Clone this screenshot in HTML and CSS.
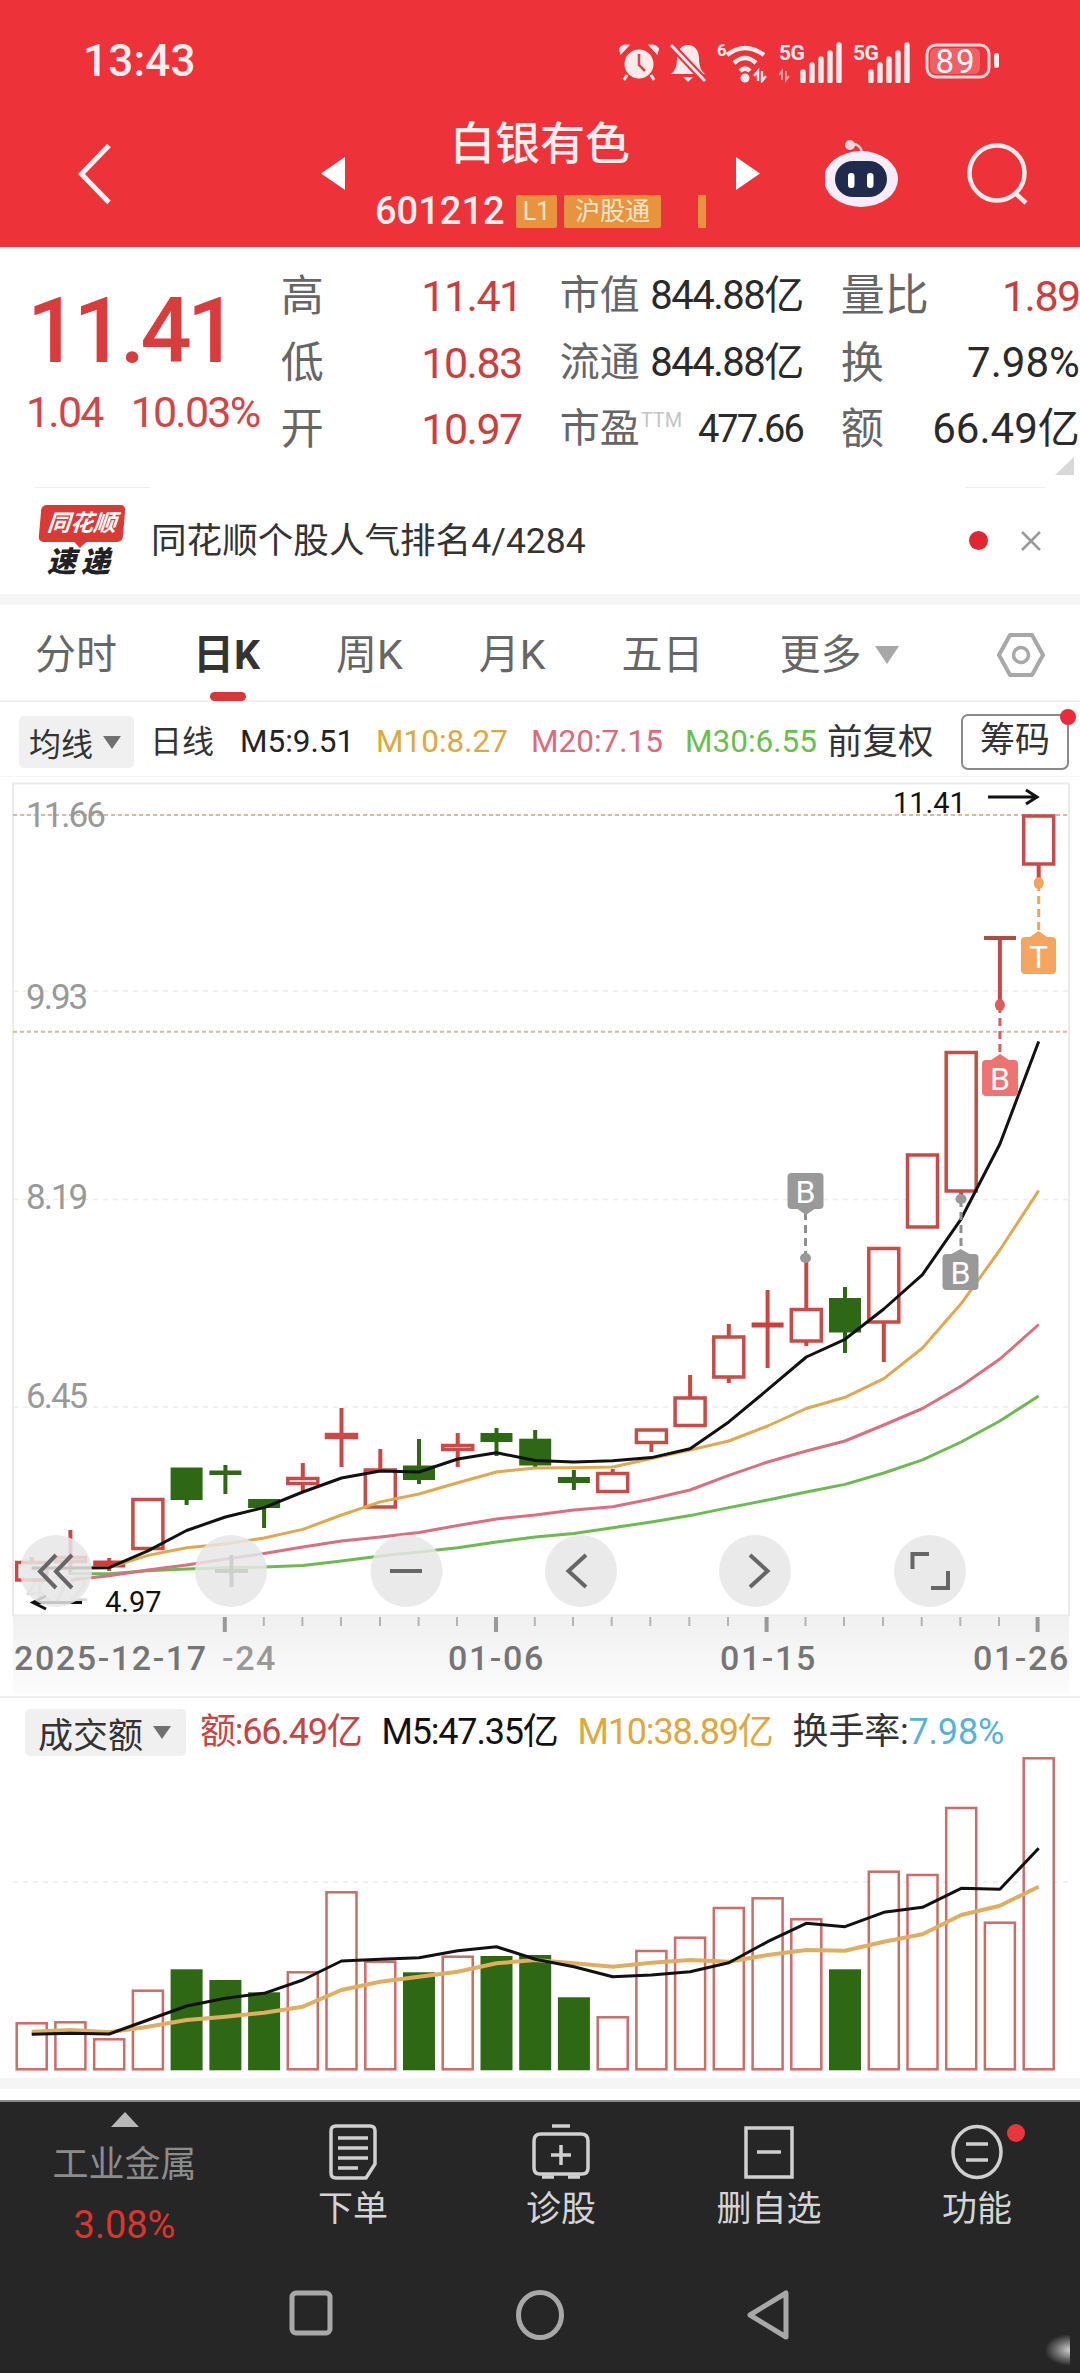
FILE: index.html
```html
<!DOCTYPE html>
<html lang="zh-CN">
<head>
    <meta charset="UTF-8">
    <meta name="viewport" content="width=device-width, initial-scale=1.0">
    <title>白银有色</title>
    <link rel="stylesheet" href="styles.css">
</head>
<body>
    <header class="top">
        <div class="status">
            <span class="clock">13:43</span>
            <div class="status-icons">
                <svg class="ico-alarm" viewBox="0 0 40 38" width="40" height="38">
                    <circle cx="20" cy="21" r="14.5" fill="#fdeaea"/>
                    <path d="M20 11v11l6 6" fill="none" stroke="#d9474c" stroke-width="2.6"/>
                    <path d="M2 10 L9 2.5 Q3 2 1 6Z M38 10 L31 2.5 Q37 2 39 6Z" fill="#fdeaea" stroke="#fdeaea" stroke-width="2"/>
                    <path d="M8 32l-3 5M32 32l3 5" stroke="#fdeaea" stroke-width="3"/>
                </svg>
                <svg class="ico-bell" viewBox="0 0 38 40" width="38" height="40">
                    <path d="M19 2c-7 0-11 6-11 13 0 6-1 12-6 16h34c-5-4-6-10-6-16 0-7-4-13-11-13z" fill="#fdeaea"/>
                    <path d="M14 34h10l-5 5z" fill="#fdeaea"/>
                    <path d="M3 3l33 35" stroke="#ee3239" stroke-width="7"/>
                    <path d="M2 2l34 36" stroke="#fdeaea" stroke-width="3"/>
                </svg>
                <svg class="sig-box" viewBox="0 -6 52 46" width="52" height="46">
                    <text class="sig-six" x="0" y="13">6</text>
                    <path d="M10 12Q28-2 47 12M17 20Q28 10 39 20M23 28Q28 23 33 28" fill="none" stroke="#fdeaea" stroke-width="4.5"/>
                    <circle cx="28" cy="35" r="4.5" fill="#fdeaea"/>
                    <path d="M41 38V28l-4 5M45 28v10l4-5" fill="none" stroke="#fdeaea" stroke-width="2.4"/>
                </svg>
                <svg class="sig-box" viewBox="0 -6 64 46" width="64" height="46">
                    <text class="sig-5g" x="0" y="17">5G</text>
                    <path d="M3 37V28l-3 4M7 28v9l3-4" fill="none" stroke="#f59aa0" stroke-width="2"/>
                    <path d="M18 38V29M27 38V22M36 38V16M45 38V10M54 38V2" transform="translate(6 0)" stroke="#fdeaea" stroke-width="5.4" stroke-linecap="round"/>
                </svg>
                <svg class="sig-box" viewBox="0 -6 58 46" width="58" height="46">
                    <text class="sig-5g" x="0" y="17">5G</text>
                    <path d="M18 38V29M27 38V22M36 38V16M45 38V10M54 38V2" stroke="#fdeaea" stroke-width="5.4" stroke-linecap="round"/>
                </svg>
                <svg class="sig-box ico-batt" viewBox="0 -6 74 48" width="74" height="48">
                    <rect x="2" y="2" width="62" height="32" rx="9" fill="none" stroke="#fbd6d8" stroke-width="3"/>
                    <rect x="5" y="5" width="50" height="26" rx="6" fill="#fff" opacity=".22"/>
                    <rect x="69" y="10" width="5" height="15" rx="2.5" fill="#fdeaea"/>
                    <text class="batt-num" x="31" y="30">89</text>
                </svg>
            </div>
        </div>
        <nav class="stock-nav">
            <svg class="back" viewBox="0 0 34 62" width="34" height="62"><path d="M31 2.5 3.5 31 31 59.5" fill="none" stroke="#fdf0f0" stroke-width="5"/></svg>
            <svg class="tri-left" viewBox="0 0 24 33" width="24" height="33"><path d="M24 0v33L0 16.5z" fill="#fff"/></svg>
            <div class="stock-title">
                <div class="stock-name">白银有色</div>
                <div class="stock-code-row">
                    <span class="stock-code">601212</span>
                    <span class="badge badge-l1">L1</span>
                    <span class="badge badge-hk">沪股通</span>
                    <span class="badge-bar"></span>
                </div>
            </div>
            <svg class="tri-right" viewBox="0 0 24 33" width="24" height="33"><path d="M0 0v33L24 16.5z" fill="#fff"/></svg>
            <svg class="robot" viewBox="825 136 74 70" width="74" height="70">
                <path d="M850 142q9-3 12 7" fill="none" stroke="#f7d4dc" stroke-width="2.5"/>
                <circle cx="850" cy="142" r="5" fill="#f7d4dc"/>
                <ellipse cx="861" cy="176" rx="37" ry="28" fill="#f5eef8"/>
                <rect x="835" y="158" width="52" height="36" rx="18" fill="#1f2a4c"/>
                <rect x="848" y="170" width="6.5" height="15" rx="3" fill="#fff"/>
                <rect x="867" y="170" width="6.5" height="15" rx="3" fill="#fff"/>
            </svg>
            <svg class="search" viewBox="965 143 62 62" width="62" height="62">
                <circle cx="995" cy="173" r="27.5" fill="none" stroke="#fdeaea" stroke-width="4.5"/>
                <path d="M1013 193l11 10" stroke="#fdeaea" stroke-width="4.5"/>
            </svg>
        </nav>
    </header>

    <section class="quote">
        <div class="price">
            <div class="price-now">11.41</div>
            <div class="price-change"><span>1.04</span><span>10.03%</span></div>
        </div>
        <div class="quote-grid">
            <div class="cell"><span class="lab lab-big">高</span><span class="val up">11.41</span></div>
            <div class="cell"><span class="lab">市值</span><span class="val">844.88亿</span></div>
            <div class="cell"><span class="lab lab-wide">量比</span><span class="val up">1.89</span></div>
            <div class="cell"><span class="lab lab-big">低</span><span class="val up">10.83</span></div>
            <div class="cell"><span class="lab">流通</span><span class="val">844.88亿</span></div>
            <div class="cell"><span class="lab lab-big">换</span><span class="val val-wide">7.98%</span></div>
            <div class="cell"><span class="lab lab-big">开</span><span class="val up">10.97</span></div>
            <div class="cell"><span class="lab">市盈<sup class="ttm">TTM</sup></span><span class="val val-tight">477.66</span></div>
            <div class="cell"><span class="lab lab-big">额</span><span class="val val-wide">66.49亿</span></div>
        </div>
        <span class="corner"></span>
    </section>

    <section class="news">
        <div class="news-logo">
            <div class="logo-top">同花顺</div>
            <div class="logo-bottom">速递</div>
        </div>
        <span class="news-text">同花顺个股人气排名4/4284</span>
        <span class="news-dot"></span>
        <svg class="news-close" viewBox="0 0 24 24" width="24" height="24"><path d="M3 3l18 18M21 3 3 21" stroke="#999" stroke-width="2.5"/></svg>
    </section>

    <div class="gap-band"></div>

    <div class="tabs">
        <span class="tab">分时</span>
        <span class="tab tab-active">日K</span>
        <span class="tab">周K</span>
        <span class="tab">月K</span>
        <span class="tab">五日</span>
        <span class="tab">更多</span>
        <span class="caret caret-tab"></span>
        <svg class="hex" viewBox="0 0 48 46" width="48" height="46">
            <path d="M13 3h22l11 20-11 20H13L2 23z" fill="none" stroke="#a8a8a8" stroke-width="4" stroke-linejoin="round"/>
            <circle cx="24" cy="23" r="7.5" fill="none" stroke="#a8a8a8" stroke-width="3.5"/>
        </svg>
    </div>

    <div class="ma-bar">
        <div class="select select-ma"><span>均线</span><span class="caret caret-small"></span></div>
        <span class="ma ma-day">日线</span>
        <span class="ma ma5">M5:9.51</span>
        <span class="ma ma10">M10:8.27</span>
        <span class="ma ma20">M20:7.15</span>
        <span class="ma ma30">M30:6.55</span>
        <span class="ma ma-adj">前复权</span>
        <span class="chips">筹码</span>
    </div>

    <svg class="kline" viewBox="0 777 1080 919" width="1080" height="919">
        <defs>
            <linearGradient id="axis-bg" x1="0" y1="0" x2="0" y2="1">
                <stop offset="0" stop-color="#f0f0f0"/>
                <stop offset="1" stop-color="#fcfcfc"/>
            </linearGradient>
        </defs>
        <path class="frame" d="M13 783.5H1069M13 783V1615.5H1069V783"/>
        <rect x="13" y="1616" width="1056" height="78" fill="url(#axis-bg)"/>

        <path class="grid" d="M13 815H1069M13 991H1069M13 1199.5H1069M13 1407H1069"/>
        <path class="grid-tan" d="M13 815H1069M13 1031.7H1069"/>

        <text class="axis-y" x="26" y="827">11.66</text>
        <text class="axis-y" x="26" y="1009">9.93</text>
        <text class="axis-y" x="26" y="1209">8.19</text>
        <text class="axis-y" x="26" y="1408">6.45</text>
        <text class="axis-y axis-faint" x="26" y="1601">4.72</text>

        <!-- wicks -->
        <path class="wick-up" d="M31.7 1557V1561M70.4 1530V1556M70.4 1563V1575M109.2 1558V1571M302.8 1463V1477M302.8 1485V1492M341.5 1408V1433M341.5 1439V1467M380.3 1449V1469M457.7 1433V1444M457.7 1451V1467M612.7 1469V1472M651.4 1444V1452M690.1 1375V1397M728.8 1324V1336M728.8 1378V1383M767.6 1290V1368M806.3 1259V1308M806.3 1342V1346M883.8 1323V1362M961.2 1192V1198M999.9 938V1005M1038.7 865V883"/>
        <path class="wick-down" d="M186.6 1500V1505M225.4 1465V1494M264.1 1508V1528M419 1439V1484M496.5 1428V1456M535.2 1430V1468M573.9 1470V1490M845 1287V1353"/>

        <!-- rising days, hollow -->
        <g class="body-up">
            <rect x="16.7" y="1562.5" width="30" height="17.5"/>
            <rect x="55.4" y="1557.5" width="30" height="4"/>
            <rect x="132.9" y="1499.5" width="30" height="49"/>
            <rect x="287.8" y="1478.5" width="30" height="5"/>
            <rect x="326.5" y="1434.5" width="30" height="3"/>
            <rect x="365.3" y="1470" width="30" height="37"/>
            <rect x="442.7" y="1445.5" width="30" height="4"/>
            <rect x="597.7" y="1473.5" width="30" height="18"/>
            <rect x="636.4" y="1430" width="30" height="12.5"/>
            <rect x="675.1" y="1398" width="30" height="27.5"/>
            <rect x="713.8" y="1337" width="30" height="40"/>
            <rect x="791.3" y="1309.5" width="30" height="31.5"/>
            <rect x="868.8" y="1248.5" width="30" height="73.5"/>
            <rect x="907.5" y="1155" width="30" height="72"/>
            <rect x="946.2" y="1052.5" width="30" height="138.5"/>
            <rect x="1023.7" y="816" width="30" height="48"/>
        </g>
        <g class="body-flat">
            <rect x="93.2" y="1560.5" width="32" height="7"/>
            <rect x="751.6" y="1322.5" width="32" height="5"/>
            <rect class="body-top" x="984" y="936" width="32" height="4"/>
        </g>
        <!-- falling days, filled -->
        <g class="body-down">
            <rect x="170.6" y="1467.5" width="32" height="32.5"/>
            <rect x="209.4" y="1470.5" width="32" height="4.5"/>
            <rect x="248.1" y="1499" width="32" height="9"/>
            <rect x="403" y="1465.5" width="32" height="14.5"/>
            <rect x="480.5" y="1433" width="32" height="9"/>
            <rect x="519.2" y="1438.7" width="32" height="26.8"/>
            <rect x="557.9" y="1477" width="32" height="6"/>
            <rect x="829" y="1298" width="32" height="34.5"/>
        </g>

        <polyline class="line-m30" points="70.4,1573.8 109.2,1573.8 147.9,1570.7 186.6,1569 225.4,1567.7 264.1,1567 302.8,1565.4 341.5,1561 380.3,1556 419,1552 457.7,1547.8 496.5,1542 535.2,1537 573.9,1533.5 612.7,1527.7 651.4,1522 690.1,1515.6 728.8,1507.6 767.6,1500 806.3,1492 845,1484.4 883.8,1473 922.5,1459.8 961.2,1442 999.9,1421 1038.7,1396"/>
        <polyline class="line-m20" points="70.4,1580 109.2,1575.7 147.9,1570 186.6,1565 225.4,1559 264.1,1553.5 302.8,1547 341.5,1541 380.3,1537 419,1532.5 457.7,1525.6 496.5,1519 535.2,1515 573.9,1510 612.7,1506.7 651.4,1499 690.1,1490 728.8,1475.4 767.6,1462 806.3,1451 845,1441 883.8,1425 922.5,1408.5 961.2,1386 999.9,1359 1038.7,1324.5"/>
        <polyline class="line-m10" points="31.7,1569 70.4,1568 109.2,1567.5 147.9,1555.4 186.6,1547.8 225.4,1544 264.1,1538 302.8,1529.4 341.5,1515 380.3,1501.9 419,1494 457.7,1482.7 496.5,1472 535.2,1468 573.9,1467.8 612.7,1467 651.4,1458.5 690.1,1450 728.8,1441 767.6,1426 806.3,1408.5 845,1397.3 883.8,1378.6 922.5,1348 961.2,1303.6 999.9,1250 1038.7,1190.6"/>
        <polyline class="line-m5" points="31.7,1568 70.4,1568 109.2,1567.7 147.9,1550.8 186.6,1530.5 225.4,1517 264.1,1507.6 302.8,1492 341.5,1478 380.3,1471 419,1472 457.7,1459 496.5,1452.8 535.2,1460.5 573.9,1462 612.7,1460.7 651.4,1457.6 690.1,1448.7 728.8,1421.9 767.6,1389.7 806.3,1357 845,1339.3 883.8,1309 922.5,1274.6 961.2,1218.8 999.9,1144 1038.7,1041.5"/>

        <!-- trade marks -->
        <path class="mark-dash mark-orange" d="M1038.7 883V937"/>
        <ellipse cx="1038.7" cy="883" rx="5" ry="6" fill="#f4a35a"/>
        <path class="tag-orange" d="M1025 937h5l8.5-6 8.5 6h5q4 0 4 4v29q0 4-4 4h-27q-4 0-4-4v-29q0-4 4-4z"/>
        <text class="tag-text" x="1038.5" y="968">T</text>
        <path class="mark-dash mark-red" d="M999.9 1005V1060"/>
        <ellipse cx="999.9" cy="1005" rx="5" ry="6" fill="#e35a5a"/>
        <path class="tag-red" d="M986 1060h5l9-6 9 6h5q4 0 4 4v28q0 4-4 4h-28q-4 0-4-4v-28q0-4 4-4z"/>
        <text class="tag-text" x="1000" y="1090">B</text>
        <path class="mark-dash mark-gray" d="M805.5 1212V1258"/>
        <ellipse cx="805.5" cy="1258" rx="5.5" ry="5" fill="#999"/>
        <path class="tag-gray" d="M791.5 1173h28q4 0 4 4v28q0 4-4 4h-5l-8.5 6-8.5-6h-6q-4 0-4-4v-28q0-4 4-4z"/>
        <text class="tag-text" x="805.5" y="1203">B</text>
        <path class="mark-dash mark-gray" d="M961 1199V1252"/>
        <ellipse cx="961" cy="1199" rx="5.5" ry="5" fill="#999"/>
        <path class="tag-gray" d="M946.5 1254h5l9-5 9 5h5q4 0 4 4v28q0 4-4 4h-28q-4 0-4-4v-28q0-4 4-4z"/>
        <text class="tag-text" x="960.5" y="1284">B</text>

        <!-- high / low notes -->
        <text class="note" x="893" y="813">11.41</text>
        <path class="note-arrow" d="M988 797H1037M1026 790l11 7-11 7"/>
        <text class="note" x="105" y="1612">4.97</text>
        <path class="note-arrow" d="M82 1602.5H33M46 1596l-13 6.5 13 6.5"/>

        <!-- floating chart buttons -->
        <g class="chart-btn">
            <circle cx="56" cy="1571" r="36"/>
            <circle cx="231" cy="1571" r="36"/>
            <circle cx="406.5" cy="1571" r="36"/>
            <circle cx="581" cy="1571" r="36"/>
            <circle cx="755" cy="1571" r="36"/>
            <circle cx="930" cy="1571" r="36"/>
        </g>
        <path class="btn-icon" d="M56 1555 40 1571.5 56 1588M72 1555 56 1571.5 72 1588"/>
        <path class="btn-icon btn-icon-soft" d="M215 1571H248M231.5 1555V1587"/>
        <path class="btn-icon" d="M390 1571H422M586 1555 568.5 1571 586 1587M750 1555 767.5 1571 750 1587M912.5 1569V1554H929M931 1588H948V1571"/>

        <!-- date axis -->
        <path class="tick" d="M263.8 1617V1626M302.4 1617V1626M341 1617V1626M380 1617V1626M418.6 1617V1626M457 1617V1626M534.8 1617V1626M573 1617V1626M611.7 1617V1626M650.3 1617V1626M689.3 1617V1626M728 1617V1626M805.5 1617V1626M844 1617V1626M883 1617V1626M921.7 1617V1626M960.3 1617V1626M999 1617V1626"/>
        <path class="tick tick-major" d="M224.8 1617V1632M496 1617V1632M766.6 1617V1632M1037.6 1617V1632"/>
        <text class="axis-x" x="14" y="1670">2025-12-17</text>
        <text class="axis-x axis-x-soft" x="222" y="1670">-24</text>
        <text class="axis-x" x="448" y="1670">01-06</text>
        <text class="axis-x" x="720" y="1670">01-15</text>
        <text class="axis-x" x="973" y="1670">01-26</text>
    </svg>

    <div class="vol-panel">
        <div class="vol-head">
            <div class="select select-vol"><span>成交额</span><span class="caret caret-small"></span></div>
            <span class="vol-item vol-amount">额:66.49亿</span>
            <span class="vol-item vol-m5">M5:47.35亿</span>
            <span class="vol-item vol-m10">M10:38.89亿</span>
            <span class="vol-item vol-rate">换手率:<b>7.98%</b></span>
        </div>
        <svg class="vol-chart" viewBox="0 1756 1080 322" width="1080" height="322">
            <path class="grid" d="M13 1882H1069"/>
            <g class="vol-up">
                <rect x="16.7" y="2023.3" width="30" height="46"/>
                <rect x="55.4" y="2022.3" width="30" height="47"/>
                <rect x="94.2" y="2039.3" width="30" height="30"/>
                <rect x="132.9" y="1990.7" width="30" height="78.6"/>
                <rect x="287.8" y="1972.3" width="30" height="97"/>
                <rect x="326.5" y="1892.3" width="30" height="177"/>
                <rect x="365.3" y="1961.7" width="30" height="107.6"/>
                <rect x="442.7" y="1956.7" width="30" height="112.6"/>
                <rect x="597.7" y="2017.3" width="30" height="52"/>
                <rect x="636.4" y="1951" width="30" height="118.3"/>
                <rect x="675.1" y="1937.7" width="30" height="131.6"/>
                <rect x="713.8" y="1908" width="30" height="161.3"/>
                <rect x="752.6" y="1898.3" width="30" height="171"/>
                <rect x="791.3" y="1919.3" width="30" height="150"/>
                <rect x="868.8" y="1871.7" width="30" height="197.6"/>
                <rect x="907.5" y="1875" width="30" height="194.3"/>
                <rect x="946.2" y="1808" width="30" height="261.3"/>
                <rect x="984.9" y="1922.7" width="30" height="146.6"/>
                <rect x="1023.7" y="1758.3" width="30" height="311"/>
            </g>
            <g class="vol-down">
                <rect x="170.6" y="1969.3" width="32" height="101"/>
                <rect x="209.4" y="1980" width="32" height="90.3"/>
                <rect x="248.1" y="1992.3" width="32" height="78"/>
                <rect x="403" y="1972.3" width="32" height="98"/>
                <rect x="480.5" y="1956" width="32" height="114.3"/>
                <rect x="519.2" y="1955" width="32" height="115.3"/>
                <rect x="557.9" y="1997.3" width="32" height="73"/>
                <rect x="829" y="1969.3" width="32" height="101"/>
            </g>
            <polyline class="vol-line-m10" points="31.7,2031.7 70.4,2030 109.2,2032.3 147.9,2026.7 186.6,2020 225.4,2016.7 264.1,2012.7 302.8,2006.7 341.5,1990 380.3,1981.7 419,1976.7 457.7,1971.7 496.5,1963.3 535.2,1960 573.9,1963.3 612.7,1966.7 651.4,1962.7 690.1,1960 728.8,1961.7 767.6,1955 806.3,1950 845,1950.7 883.8,1941.7 922.5,1934.3 961.2,1915 999.9,1905.7 1038.7,1886.7"/>
            <polyline class="vol-line-m5" points="31.7,2034.3 70.4,2033.3 109.2,2034 147.9,2020 186.6,2006 225.4,1998.3 264.1,1993.3 302.8,1980 341.5,1961 380.3,1959.3 419,1957.7 457.7,1950.7 496.5,1946.7 535.2,1959.3 573.9,1966.7 612.7,1976.7 651.4,1975 690.1,1971.7 728.8,1962.7 767.6,1941.7 806.3,1923.3 845,1926.7 883.8,1912.3 922.5,1907.3 961.2,1888.3 999.9,1889.3 1038.7,1848.3"/>
        </svg>
    </div>
    <div class="under-band"></div>

    <footer class="dock">
        <div class="dock-row">
            <div class="sector">
                <svg class="sector-tri" viewBox="0 0 28 15" width="28" height="15"><path d="M14 0l14 15H0z" fill="#b8b8b8"/></svg>
                <div class="sector-name">工业金属</div>
                <div class="sector-pct">3.08%</div>
            </div>
            <div class="dock-item">
                <svg class="dock-ico" viewBox="0 0 48 56" width="48" height="56">
                    <path d="M7 2h34q5 0 5 5v33l-9 14H7q-5 0-5-5V7q0-5 5-5z"/>
                    <path d="M9 14h30M9 24h30M9 34h30M9 44h20"/>
                </svg>
                <span>下单</span>
            </div>
            <div class="dock-item">
                <svg class="dock-ico" viewBox="0 0 58 56" width="58" height="56">
                    <path d="M20 2h18M9 10h40q7 0 7 7v27q0 6-6 6H8q-6 0-6-6V17q0-7 7-7z"/>
                    <path d="M29 21v20M19 31h20M10 53h12M36 53h12"/>
                </svg>
                <span>诊股</span>
            </div>
            <div class="dock-item">
                <svg class="dock-ico" viewBox="0 0 50 56" width="50" height="56">
                    <path d="M2 4h46v49H2z"/>
                    <path d="M13 28h24"/>
                </svg>
                <span>删自选</span>
            </div>
            <div class="dock-item dock-func">
                <svg class="dock-ico" viewBox="0 0 52 56" width="52" height="56">
                    <ellipse cx="26" cy="28" rx="24" ry="25.5"/>
                    <path d="M15 20h22M15 36h22"/>
                </svg>
                <span>功能</span>
                <i class="dock-dot"></i>
            </div>
        </div>
        <div class="sys-nav">
            <svg viewBox="0 0 44 46" width="44" height="46"><rect x="3" y="3" width="38" height="40" rx="4" class="sys-ico"/></svg>
            <svg viewBox="0 0 48 50" width="48" height="50"><ellipse cx="24" cy="25" rx="21.5" ry="22.5" class="sys-ico"/></svg>
            <svg viewBox="0 0 42 50" width="42" height="50"><path d="M39 3v44L3 25z" class="sys-ico"/></svg>
        </div>
    </footer>
</body>
</html>
```

FILE: styles.css
```css
* {
    box-sizing: border-box;
}
html, body {
    margin: 0;
    padding: 0;
}
body {
    width: 1080px;
    height: 2373px;
    overflow: hidden;
    background: #fff;
    color: #333;
    font-family: Roboto, "Noto Sans CJK SC", sans-serif;
}
svg {
    display: block;
    flex: none;
}

/* red header */
.top {
    height: 247px;
    background: #ee3239;
    color: #fdeeee;
}
.status {
    height: 100px;
    display: flex;
    align-items: flex-start;
    padding: 36px 0 0 83px;
}
.clock {
    font-size: 44px;
    line-height: 50px;
    font-weight: 500;
    letter-spacing: 0.2px;
}
.status-icons {
    display: flex;
    margin-left: auto;
    padding: 7px 81px 0 0;
    gap: 10px;
}
.sig-box {
    margin-top: -6px;
}
.ico-batt {
    margin-left: 4px;
}
.sig-six {
    font-size: 17px;
    font-weight: 700;
    fill: #fdeaea;
}
.sig-5g {
    font-size: 21px;
    font-weight: 700;
    fill: #fdeaea;
    letter-spacing: -0.5px;
}
.batt-num {
    font-size: 33px;
    fill: #fff;
    text-anchor: middle;
    letter-spacing: 2px;
}
.stock-nav {
    height: 147px;
    display: flex;
    align-items: center;
    padding-left: 78px;
}
.tri-left {
    margin-left: 209px;
}
.stock-title {
    width: 391px;
    height: 147px;
    padding-top: 20px;
}
.stock-name {
    font-size: 45px;
    line-height: 50px;
    font-weight: 500;
    text-align: center;
    margin-left: -1px;
}
.stock-code-row {
    display: flex;
    align-items: center;
    height: 34px;
    margin-top: 24px;
    padding-left: 30px;
}
.stock-code {
    font-size: 38px;
    line-height: 34px;
    font-weight: 500;
    width: 141px;
}
.badge {
    height: 33px;
    line-height: 33px;
    font-size: 25px;
    text-align: center;
    background: #e8943f;
    color: #fbe6cc;
    border-radius: 2px;
}
.badge-l1 {
    width: 41px;
}
.badge-hk {
    width: 97px;
    margin-left: 7px;
}
.badge-bar {
    width: 8px;
    height: 33px;
    margin-left: 37px;
    background: #e8943f;
}
.robot {
    margin-left: 65px;
}
.search {
    margin-left: 68px;
}

/* quote block */
.quote {
    position: relative;
    height: 240px;
    display: flex;
    padding-left: 28px;
}
.price {
    width: 253px;
    color: #d93c3c;
}
.price-now {
    margin: 40px 0 0 -1px;
    font-size: 90px;
    line-height: 90px;
    font-weight: 500;
    letter-spacing: -4.6px;
}
.price-change {
    display: flex;
    gap: 28px;
    margin: 10px 0 0 -2px;
    font-size: 43px;
    line-height: 50px;
    letter-spacing: -1.8px;
    color: #d24545;
}
.quote-grid {
    width: 800px;
    padding-top: 16px;
    display: grid;
    grid-template-columns: 241px 243px 239px;
    grid-auto-rows: 66.5px;
    column-gap: 38px;
}
.cell {
    display: flex;
    justify-content: space-between;
    align-items: center;
    white-space: nowrap;
}
.lab {
    font-size: 40px;
    color: #666;
    line-height: 50px;
}
.lab-big {
    font-size: 43px;
}
.lab-wide {
    font-size: 44px;
}
.ttm {
    font-size: 20px;
    color: #c4c4c4;
    line-height: 0;
    vertical-align: 15px;
    margin-left: 1px;
}
.val {
    font-size: 40px;
    letter-spacing: -1.5px;
    color: #2a2a2a;
    line-height: 50px;
}
.val.up {
    font-size: 43px;
    letter-spacing: -1.5px;
    color: #cc3d3d;
}
.val-wide {
    font-size: 42px;
    letter-spacing: 0;
}
.val-tight {
    font-size: 38px;
    letter-spacing: -2px;
}
.corner {
    position: absolute;
    right: 6px;
    bottom: 12px;
    width: 0;
    height: 0;
    border-left: 19px solid transparent;
    border-bottom: 18px solid #d8d8d8;
}

/* news strip */
.news {
    height: 107px;
    display: flex;
    align-items: center;
    padding: 0 37px 0 38px;
    background:
        linear-gradient(#eeeeee, #eeeeee) 35px 0 / 115px 1px no-repeat,
        linear-gradient(#eeeeee, #eeeeee) 965px 0 / 80px 1px no-repeat;
}
.news-logo {
    width: 87px;
    margin-top: 2px;
}
.logo-top {
    position: relative;
    height: 37px;
    width: 84px;
    margin-left: 2px;
    background: #d93a36;
    border-radius: 5px;
    color: #fff;
    font-size: 23px;
    font-weight: 700;
    font-style: italic;
    line-height: 37px;
    text-align: center;
    transform: skewX(-5deg);
}
.logo-top::after {
    content: '';
    position: absolute;
    left: 36px;
    bottom: -6px;
    border: 6px solid transparent;
    border-top-color: #d93a36;
    border-bottom: 0;
}
.logo-bottom {
    margin: 4px 0 0 9px;
    font-size: 29px;
    line-height: 32px;
    font-weight: 900;
    font-style: italic;
    letter-spacing: 5px;
    color: #222;
}
.news-text {
    margin-left: 26px;
    font-size: 35.6px;
    line-height: 48px;
    color: #333;
}
.news-dot {
    width: 19px;
    height: 19px;
    margin-left: auto;
    border-radius: 50%;
    background: #e0262e;
}
.news-close {
    margin-left: 31px;
}
.gap-band {
    height: 11px;
    background: #f5f5f5;
}

/* period tabs */
.tabs {
    position: relative;
    height: 97px;
    display: flex;
    align-items: center;
    padding: 5px 35px 0 35px;
    gap: 76px;
    border-bottom: 2px solid #f0f0f0;
}
.tab {
    font-size: 41px;
    line-height: 50px;
    color: #666;
}
.tab-active {
    position: relative;
    color: #333;
    font-weight: 700;
}
.tab-active::after {
    content: '';
    position: absolute;
    left: 17px;
    top: 62px;
    width: 36px;
    height: 9px;
    border-radius: 5px;
    background: #d9363a;
}
.caret {
    display: block;
    width: 0;
    height: 0;
    border-style: solid;
    border-color: #a8a8a8 transparent transparent;
}
.caret-tab {
    margin-left: -63px;
    border-width: 18px 12px 0;
}
.hex {
    margin-left: auto;
}

/* moving average legend */
.ma-bar {
    height: 75px;
    display: flex;
    align-items: center;
    padding: 6px 0 0 19px;
    border-bottom: 1px solid #f4f4f4;
}
.select {
    display: flex;
    align-items: center;
    background: #f0f0f0;
    border-radius: 5px;
    color: #333;
}
.select-ma {
    width: 115px;
    height: 52px;
    padding-left: 10px;
    font-size: 32px;
    margin-right: 16px;
}
.caret-small {
    margin-left: 10px;
    border-width: 13px 9px 0;
    border-top-color: #707070;
}
.ma {
    font-size: 31.5px;
    line-height: 40px;
    white-space: nowrap;
}
.ma-day {
    width: 90px;
    font-size: 32px;
    color: #333;
}
.ma5 {
    width: 136px;
    color: #222;
}
.ma10 {
    width: 155px;
    color: #e0a83c;
}
.ma20 {
    width: 154px;
    color: #e0687a;
}
.ma30 {
    width: 142px;
    color: #6abf4b;
}
.ma-adj {
    width: 134px;
    font-size: 35.5px;
    color: #333;
}
.chips {
    position: relative;
    width: 108px;
    height: 56px;
    border: 2px solid #8a8a8a;
    border-radius: 7px;
    font-size: 35px;
    line-height: 50px;
    text-align: center;
    color: #333;
}
.chips::after {
    content: '';
    position: absolute;
    right: -9px;
    top: -7px;
    width: 16px;
    height: 16px;
    border-radius: 50%;
    background: #ee2a3a;
}

/* kline chart */
.kline text {
    font-family: Roboto, sans-serif;
}
.frame {
    fill: none;
    stroke: #ebebeb;
    stroke-width: 2;
}
.grid {
    fill: none;
    stroke: #ececec;
    stroke-width: 1.5;
    stroke-dasharray: 5 5;
}
.grid-tan {
    fill: none;
    stroke: #cdbf98;
    stroke-width: 2;
    stroke-dasharray: 4 3;
}
.axis-y {
    font-size: 35px;
    letter-spacing: -2px;
    fill: #999;
}
.axis-faint {
    fill: #aaa;
    opacity: .5;
}
.wick-up {
    fill: none;
    stroke: #cb4742;
    stroke-width: 4;
}
.wick-down {
    fill: none;
    stroke: #2f6815;
    stroke-width: 4;
}
.body-up rect {
    fill: #fff;
    stroke: #c84b46;
    stroke-width: 3.5;
}
.body-flat rect {
    fill: #cf3d3a;
}
.body-flat .body-top {
    fill: #b04a48;
}
.body-down rect {
    fill: #2f6815;
}
polyline {
    fill: none;
    stroke-width: 3;
    stroke-linejoin: round;
}
.line-m5 {
    stroke: #111;
}
.line-m10 {
    stroke: #e0a950;
}
.line-m20 {
    stroke: #d96f80;
}
.line-m30 {
    stroke: #6cbb50;
}
.mark-dash {
    fill: none;
    stroke-width: 3;
    stroke-dasharray: 8 5;
}
.mark-orange {
    stroke: #f4a35a;
}
.mark-red {
    stroke: #e35a5a;
}
.mark-gray {
    stroke: #8f8f8f;
}
.tag-orange {
    fill: #f5a55e;
}
.tag-red {
    fill: #ee7373;
}
.tag-gray {
    fill: #999;
}
.tag-text {
    font-size: 32px;
    fill: #fff;
    text-anchor: middle;
}
.note {
    font-size: 29px;
    fill: #111;
}
.note-arrow {
    fill: none;
    stroke: #111;
    stroke-width: 3;
}
.chart-btn circle {
    fill: #e6e6e6;
    opacity: .85;
}
.btn-icon {
    fill: none;
    stroke: #666;
    stroke-width: 4;
}
.btn-icon-soft {
    stroke: #cfcfcf;
}
.tick {
    fill: none;
    stroke: #b4b4b4;
    stroke-width: 2;
}
.tick-major {
    stroke: #999;
    stroke-width: 4;
}
.axis-x {
    font-size: 34px;
    font-weight: 500;
    letter-spacing: 1.6px;
    fill: #757575;
}
.axis-x-soft {
    fill: #999;
}

/* volume panel */
.vol-panel {
    height: 382px;
    border-top: 2px solid #f0f0f0;
}
.vol-head {
    height: 58px;
    display: flex;
    align-items: flex-end;
    padding-left: 25px;
}
.select-vol {
    width: 161px;
    height: 47px;
    padding-left: 13px;
    font-size: 35px;
    margin-right: 14px;
}
.vol-item {
    font-size: 36px;
    line-height: 47px;
    letter-spacing: -1.2px;
    margin-right: 20px;
    white-space: nowrap;
}
.vol-amount {
    color: #c84444;
}
.vol-m5 {
    color: #111;
}
.vol-m10 {
    color: #e0a83c;
}
.vol-rate {
    color: #333;
    letter-spacing: -0.2px;
}
.vol-rate b {
    font-weight: 400;
    color: #58b2d8;
}
.vol-up rect {
    fill: #fff;
    stroke: #cc6c68;
    stroke-width: 2.5;
}
.vol-down rect {
    fill: #2f6815;
}
.vol-line-m5 {
    stroke: #111;
    stroke-width: 3;
}
.vol-line-m10 {
    stroke: #e0ae60;
    stroke-width: 4;
}
.under-band {
    height: 22px;
    background: linear-gradient(#f5f5f5 11px, #fff 11px);
}

/* bottom dock */
.dock {
    position: relative;
    height: 273px;
    background: #262626;
    border-top: 2px solid #8a8a8a;
}
.dock::after {
    content: '';
    position: absolute;
    left: 1046px;
    top: 233px;
    width: 24px;
    height: 30px;
    background: radial-gradient(ellipse at 100% 50%, #cfcfcf 0, #666 45%, transparent 75%);
}
.dock-row {
    display: grid;
    grid-template-columns: 249px repeat(4, 208px);
    height: 170px;
}
.sector {
    padding-top: 10px;
    text-align: center;
}
.sector-tri {
    margin: 0 auto;
}
.sector-name {
    margin-top: 16px;
    font-size: 36px;
    line-height: 44px;
    color: #8c8c8c;
}
.sector-pct {
    margin-top: 16px;
    font-size: 38px;
    line-height: 44px;
    color: #dd352b;
}
.dock-item {
    position: relative;
    padding-top: 22px;
    text-align: center;
    font-size: 35px;
    line-height: 40px;
    color: #d4d4d4;
}
.dock-item span {
    display: block;
    margin-top: 10px;
}
.dock-ico {
    margin: 0 auto;
    fill: none;
    stroke: #d0d0d0;
    stroke-width: 3.5;
}
.dock-dot {
    position: absolute;
    left: 134px;
    top: 22px;
    width: 18px;
    height: 18px;
    border-radius: 50%;
    background: #e8373c;
}
.sys-nav {
    display: flex;
    align-items: flex-start;
    padding: 18px 0 0 289px;
    gap: 183px;
}
.sys-ico {
    fill: none;
    stroke: #a8a8a8;
    stroke-width: 5;
    stroke-linejoin: round;
}
```
